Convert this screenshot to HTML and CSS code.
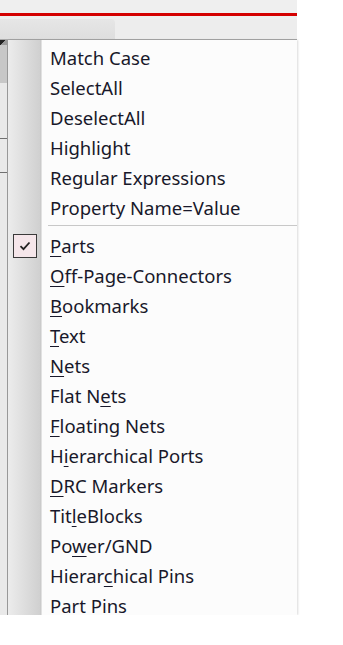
FILE: index.html
```html
<!DOCTYPE html>
<html lang="en">
<head>
    <meta charset="UTF-8">
    <title>Filter Menu</title>
    <link rel="stylesheet" href="styles.css">
</head>
<body>
    <div class="window">
        <div class="titlebar">
            <div class="redline"></div>
        </div>
        <div class="tabbar">
            <div class="tab"></div>
        </div>
        <div class="main">
            <div class="app-edge">
                <div class="edge-corner"></div>
                <div class="edge-dark"></div>
                <div class="edge-line"></div>
                <div class="edge-line"></div>
            </div>
            <div class="menu">
                <ul class="items">
                    <li>Match Case</li>
                    <li>SelectAll</li>
                    <li>DeselectAll</li>
                    <li>Highlight</li>
                    <li>Regular Expressions</li>
                    <li>Property Name=Value</li>
                    <li class="sep"></li>
                    <li class="checked"><span class="check"><svg width="12" height="10" viewBox="0 0 12 10"><path d="M1.5 5.2 L4.5 8.2 L10.5 1.5" fill="none" stroke="#222" stroke-width="1.8"/></svg></span><u>P</u>arts</li>
                    <li><u>O</u>ff-Page-Connectors</li>
                    <li><u>B</u>ookmarks</li>
                    <li><u>T</u>ext</li>
                    <li><u>N</u>ets</li>
                    <li>Flat N<u>e</u>ts</li>
                    <li><u>F</u>loating Nets</li>
                    <li>H<u>i</u>erarchical Ports</li>
                    <li><u>D</u>RC Markers</li>
                    <li>Tit<u>l</u>eBlocks</li>
                    <li>Po<u>w</u>er/GND</li>
                    <li>Hierar<u>c</u>hical Pins</li>
                    <li>P<u>a</u>rt Pins</li>
                </ul>
            </div>
        </div>
    </div>
</body>
</html>
```

FILE: styles.css
```css
body {
    margin: 0;
    background-color: #fff;
    font-family: "Noto Sans", "Open Sans", sans-serif;
}
.window {
    width: 297px;
}
.titlebar {
    height: 19px;
    background-color: #efefef;
    padding-top: 13px;
    box-sizing: border-box;
}
.redline {
    height: 3px;
    background-color: #d40000;
}
.tabbar {
    height: 21px;
    background-color: #ededed;
    border-bottom: 1px solid #a8a8a8;
    box-sizing: border-box;
}
.tab {
    width: 115px;
    height: 20px;
    background: linear-gradient(#e6e6e6, #dedede);
    border-top-right-radius: 4px;
}
.main {
    display: flex;
}
.app-edge {
    width: 7px;
    background-color: #e9e9e9;
    border-right: 1px solid #9a9a9a;
}
.edge-corner {
    height: 5px;
    background: linear-gradient(135deg, #222 50%, #999 50%);
}
.edge-dark {
    height: 38px;
    background-color: #c7c7c7;
}
.edge-line {
    height: 1px;
    background-color: #707070;
    margin-top: 55px;
}
.edge-line + .edge-line {
    margin-top: 33px;
}
.menu {
    flex: 1;
    height: 575px;
    overflow: hidden;
    background: linear-gradient(to right, #ececec 0, #d0d0d0 32px, #c6c6c6 33px, #fcfcfc 34px, #fcfcfc 100%);
    box-shadow: 1px 0 2px rgba(0, 0, 0, 0.15);
}
.items {
    list-style: none;
    margin: 0;
    padding: 3px 0 0;
}
.items li {
    position: relative;
    height: 30px;
    line-height: 30px;
    padding-left: 42px;
    font-size: 18.5px;
    color: #18182a;
    white-space: nowrap;
}
.items u {
    text-decoration-thickness: 1px;
    text-underline-offset: 3px;
}
.items li.sep {
    height: 8px;
    margin-left: 40px;
    padding: 0;
    background: linear-gradient(#fcfcfc 2px, #c8c8c8 2px, #c8c8c8 3px, #fcfcfc 3px);
}
.check {
    position: absolute;
    left: 5px;
    top: 3px;
    width: 22px;
    height: 22px;
    border: 1px solid #3a3a3a;
    background-color: #f5e6ea;
    display: flex;
    align-items: center;
    justify-content: center;
}
```
